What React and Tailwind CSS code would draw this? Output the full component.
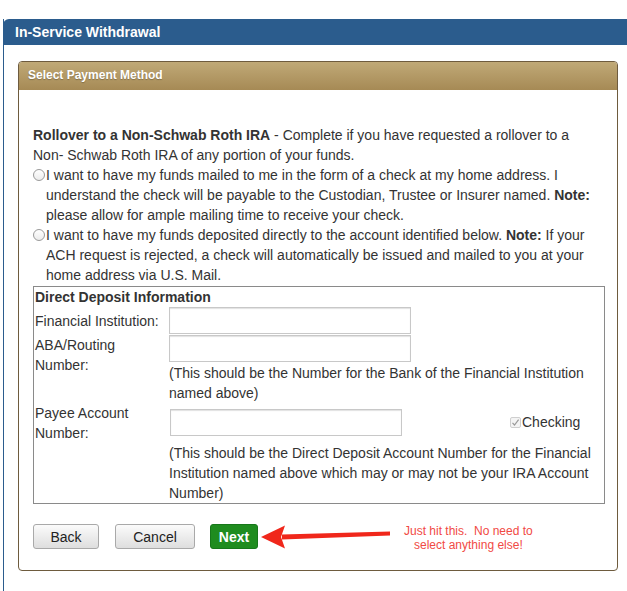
import React from 'react'

function Radio() {
  return (
    <span className="mt-[4px] mr-[1px] inline-block w-[12px] h-[12px] shrink-0 rounded-full border border-[#9a9a9a] bg-gradient-to-b from-white to-[#ececec]" />
  )
}

function TextInput({ w }) {
  return (
    <input
      type="text"
      className={`block h-[27px] border border-[#c8c8c8] bg-white shadow-[inset_0_1px_1px_rgba(0,0,0,0.12)] outline-none ${w}`}
    />
  )
}

function Button({ w, children }) {
  return (
    <button className={`h-[25px] rounded-[3px] border border-[#a9a9a9] bg-gradient-to-b from-[#fbfbfb] to-[#dedede] text-[14px] text-[#222] ${w}`}>
      {children}
    </button>
  )
}

export default function App() {
  return (
    <div className="w-[627px] h-[591px] overflow-hidden bg-white text-[14px] leading-[20px] text-[#333] font-['Liberation_Sans',Arial,sans-serif]">
      <div className="ml-[3px] mt-[19px] h-[572px] w-[640px] border-l border-[#2b5c8d]">
        {/* blue title bar */}
        <div className="-ml-px h-[26px] rounded-tl-[6px] bg-[#2b5c8d] pl-[12px] text-[14px] font-bold leading-[27px] text-white">
          In-Service Withdrawal
        </div>

        {/* gold panel */}
        <div className="ml-[14px] mt-[16px] w-[600px] rounded-[4px] border border-[#6e5b3e]">
          <div className="h-[28px] rounded-t-[3px] bg-gradient-to-b from-[#c0a977] to-[#a68a55] pl-[9px] text-[12px] font-bold leading-[27px] text-white [text-shadow:0_1px_1px_rgba(0,0,0,0.25)]">
            Select Payment Method
          </div>

          <div className="pl-[14px] pr-[12px] pt-[35px] pb-[21px]">
            <p className="pr-[2px]">
              <b>Rollover to a Non-Schwab Roth IRA</b> - Complete if you have requested a rollover to a Non- Schwab Roth IRA of any portion of your funds.
            </p>
            <div className="flex pr-[2px]">
              <Radio />
              <p>
                I want to have my funds mailed to me in the form of a check at my home address. I understand the check will be payable to the Custodian, Trustee or Insurer named. <b>Note:</b> please allow for ample mailing time to receive your check.
              </p>
            </div>
            <div className="flex pr-[2px]">
              <Radio />
              <p>
                I want to have my funds deposited directly to the account identified below. <b>Note:</b> If your ACH request is rejected, a check will automatically be issued and mailed to you at your home address via U.S. Mail.
              </p>
            </div>

            {/* direct deposit box */}
            <div className="mt-[1px] border border-[#8a8a8a] pl-[1px] pr-[4px]">
              <div className="font-bold">Direct Deposit Information</div>
              <div className="grid grid-cols-[134px_1fr]">
                <div className="flex items-center">Financial Institution:</div>
                <div className="pb-[1px]">
                  <TextInput w="w-[242px]" />
                </div>

                <div>ABA/Routing<br />Number:</div>
                <div>
                  <TextInput w="w-[242px] h-[26px]" />
                  <p className="pt-[1px]">(This should be the Number for the Bank of the Financial Institution named above)</p>
                </div>

                <div>Payee Account<br />Number:</div>
                <div>
                  <div className="flex items-start pt-[6px]">
                    <div className="ml-[1px]">
                      <TextInput w="w-[232px]" />
                    </div>
                    <label className="ml-[108px] mt-[3px] flex items-center">
                      <span className="flex h-[11px] w-[11px] items-center justify-center rounded-[2px] border border-[#cfcfcf] bg-[#f4f4f4]">
                        <svg width="9" height="9" viewBox="0 0 9 9">
                          <path d="M1.5 4.8 L3.5 7 L7.6 1.6" fill="none" stroke="#9a9a9a" strokeWidth="1.2" />
                        </svg>
                      </span>
                      <span className="ml-[1px]">Checking</span>
                    </label>
                  </div>
                  <p className="pt-[7px] pr-[4px]">(This should be the Direct Deposit Account Number for the Financial Institution named above which may or may not be your IRA Account Number)</p>
                </div>
              </div>
            </div>

            {/* actions */}
            <div className="mt-[20px] flex h-[25px] items-start">
              <Button w="w-[66px]">Back</Button>
              <div className="ml-[16px]">
                <Button w="w-[80px]">Cancel</Button>
              </div>
              <button className="ml-[15px] h-[25px] w-[48px] rounded-[3px] border border-[#17771a] bg-[#1f8c1f] text-[14px] font-bold text-white">
                Next
              </button>
              <svg width="132" height="26" viewBox="0 0 132 26" className="ml-[2px] shrink-0">
                <path d="M22 10.5 L130 7.5 L130 11.5 L22 15.5 Z" fill="#f0271b" />
                <path d="M1 13 L25 1.5 L21 13 L25 24.5 Z" fill="#f0271b" />
              </svg>
              <div className="ml-[12px] text-center text-[12px] leading-[14px] text-[#f14a44]">
                Just hit this.&nbsp; No need to<br />select anything else!
              </div>
            </div>
          </div>
        </div>
      </div>
    </div>
  )
}
